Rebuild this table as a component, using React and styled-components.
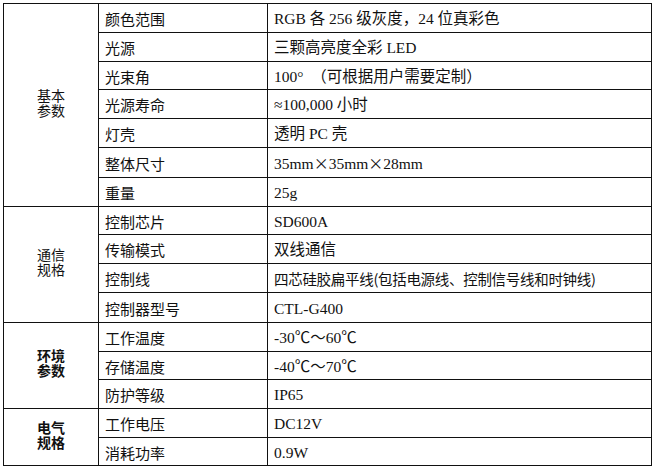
import React from "react";
import styled, { createGlobalStyle } from "styled-components";

const GlobalStyle = createGlobalStyle`
  html, body {
    margin: 0;
    padding: 0;
    background: #ffffff;
  }
`;

const X = () => <Wide>×</Wide>;

const sections = [
  {
    title: ["基本", "参数"],
    strong: false,
    rows: [
      ["颜色范围", "RGB 各 256 级灰度，24 位真彩色", 29],
      ["光源", "三颗高亮度全彩 LED", 29],
      ["光束角", "100°  （可根据用户需要定制）", 28],
      ["光源寿命", "≈100,000 小时", 29],
      ["灯壳", "透明 PC 壳", 29],
      ["整体尺寸", <>35mm<X />35mm<X />28mm</>, 30],
      ["重量", "25g", 29]
    ]
  },
  {
    title: ["通信", "规格"],
    strong: false,
    rows: [
      ["控制芯片", "SD600A", 28],
      ["传输模式", "双线通信", 29],
      ["控制线", "四芯硅胶扁平线(包括电源线、控制信号线和时钟线)", 29, true],
      ["控制器型号", "CTL-G400", 30]
    ]
  },
  {
    title: ["环境", "参数"],
    strong: true,
    rows: [
      ["工作温度", "-30℃～60℃", 29],
      ["存储温度", "-40℃～70℃", 28],
      ["防护等级", "IP65", 29]
    ]
  },
  {
    title: ["电气", "规格"],
    strong: true,
    rows: [
      ["工作电压", "DC12V", 29],
      ["消耗功率", "0.9W", 28]
    ]
  }
];

export default function App() {
  return (
    <>
      <GlobalStyle />
      <Page>
        <SpecTable>
          <colgroup>
            <Col $w={95} />
            <Col $w={169} />
            <Col $w={384} />
          </colgroup>
          <tbody>
            {sections.map((section) =>
              section.rows.map(([label, value, h, sans], i) => (
                <Row key={label} $h={h}>
                  {i === 0 && (
                    <GroupCell rowSpan={section.rows.length} $strong={section.strong}>
                      {section.title.map((t) => (
                        <GroupLine key={t}>{t}</GroupLine>
                      ))}
                    </GroupCell>
                  )}
                  <LabelCell>{label}</LabelCell>
                  <ValueCell $sans={sans}>{value}</ValueCell>
                </Row>
              ))
            )}
          </tbody>
        </SpecTable>
      </Page>
    </>
  );
}

const Page = styled.div`
  padding: 3px 0 0 3px;
`;

const SpecTable = styled.table`
  border-collapse: collapse;
  table-layout: fixed;
  width: 649px;
  color: #111;
  td {
    border: 1px solid #111;
    padding: 2px 0 0 6px;
    box-sizing: border-box;
    white-space: nowrap;
    overflow: hidden;
  }
`;

const Col = styled.col`
  width: ${(p) => p.$w}px;
`;

const Row = styled.tr`
  height: ${(p) => p.$h}px;
`;

const GroupCell = styled.td`
  && {
    padding: 0 0 5px 0;
  }
  text-align: center;
  font-family: "Noto Sans CJK SC", sans-serif;
  font-size: 14px;
  line-height: 15px;
  font-weight: ${(p) => (p.$strong ? 700 : 400)};
`;

const GroupLine = styled.div`
  height: 15px;
  overflow: visible;
`;

const LabelCell = styled.td`
  font-family: "Noto Sans CJK SC", sans-serif;
  font-size: 15px;
  font-weight: 400;
  line-height: 18px;
`;

const ValueCell = styled.td`
  font-family: ${(p) =>
    p.$sans
      ? `"Noto Sans CJK SC", sans-serif`
      : `"Liberation Serif", "Noto Sans CJK SC", serif`};
  font-size: ${(p) => (p.$sans ? "14.5px" : "15.5px")};
  line-height: 18px;
  white-space: pre !important;
  letter-spacing: ${(p) => (p.$sans ? "-0.3px" : "0")};
`;

const Wide = styled.span`
  font-family: "Noto Sans CJK SC", sans-serif;
  font-size: 15px;
`;
